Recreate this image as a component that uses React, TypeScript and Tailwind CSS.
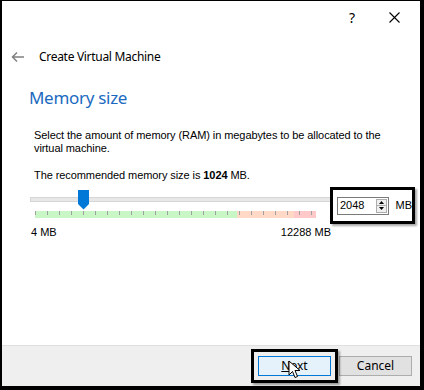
import React from 'react'

const ticks = Array.from({ length: 24 }, (_, i) => i)

function Cursor() {
  return (
    <svg width="14" height="20" viewBox="0 0 14 20" className="absolute left-[34px] top-[8px]">
      <path d="M1 1 L1 15 L4.5 11.5 L7 17.5 L9.5 16.5 L7 10.5 L12 10.5 Z" fill="#fff" stroke="#000" strokeWidth="1" strokeLinejoin="round" />
    </svg>
  )
}

function App() {
  return (
    <div className="relative box-border flex h-[390px] w-[424px] flex-col overflow-hidden border-b-[4px] border-l-2 border-r-[4px] border-t border-black bg-white">
      {/* title bar */}
      <div className="flex h-[33px] items-center justify-end pr-[20px] text-[15px] text-black" style={{ fontFamily: '"Noto Sans", sans-serif' }}>
        <span className="mr-[34px] text-[14px]">?</span>
        <svg width="11" height="11" viewBox="0 0 11 11">
          <path d="M0.5 0.5 L10.5 10.5 M10.5 0.5 L0.5 10.5" stroke="#000" strokeWidth="1.1" />
        </svg>
      </div>

      <div className="flex h-[46px] items-center pl-[9px]" style={{ fontFamily: '"Noto Sans", sans-serif' }}>
        <svg width="14" height="12" viewBox="0 0 14 12">
          <path d="M13 6 H1.5 M6 1.5 L1.5 6 L6 10.5" fill="none" stroke="#808080" strokeWidth="1.5" />
        </svg>
        <span className="ml-[14px] text-[12px] tracking-[-0.3px] text-black">Create Virtual Machine</span>
      </div>

      <div className="pl-[27px] pt-[6px] text-[17px] leading-[24px] tracking-[-0.3px] text-[#1b6ac0]" style={{ fontFamily: '"Noto Sans", sans-serif' }}>
        Memory size
      </div>

      <div className="flex flex-col pl-[32px] text-[11px] text-black" style={{ fontFamily: '"Liberation Sans", Arial, sans-serif' }}>
        <p className="mt-[19px] w-[360px] leading-[13px] tracking-[-0.08px]">
          Select the amount of memory (RAM) in megabytes to be allocated to the virtual machine.
        </p>
        <p className="mt-[14px] leading-[13px] tracking-[-0.08px]">
          The recommended memory size is <b>1024</b> MB.
        </p>

        <div className="mt-[9px] flex items-start">
          <div className="flex w-[296px] shrink-0 flex-col">
            <div className="relative h-[20px]">
              <div className="absolute left-[-4px] right-[-4px] top-[6px] h-[5px] border border-[#d6d6d6] bg-[#e7e7e7]" />
              <svg width="11" height="20" viewBox="0 0 11 20" className="absolute left-[44px] top-[-1px]">
                <path d="M0 0 H11 V14 L5.5 19.5 L0 14 Z" fill="#0078d7" />
              </svg>
            </div>
            <div className="relative ml-[1px] flex h-[7px] w-[281px]">
              <div className="h-full w-[202px] bg-[#c8f7c5]" />
              <div className="h-full w-[57px] bg-[#ffd9c5]" />
              <div className="h-full w-[22px] bg-[#ffc9c9]" />
              {ticks.map((i) => (
                <div key={i} className="absolute top-0 h-[4px] w-px bg-[#a0a0a0]" style={{ left: i * 12 }} />
              ))}
            </div>
            <div className="mr-[-1px] mt-[8px] flex justify-between leading-[13px]">
              <span className="ml-[-3px]">4 MB</span>
              <span>12288 MB</span>
            </div>
          </div>

          <div className="relative mt-[-4px] flex h-[37px] w-[85px] shrink-0 items-center border-[3px] border-black bg-white pl-[4px] shadow-[2px_2px_2px_rgba(0,0,0,0.35)]">
            <div className="flex h-[18px] w-[54px] items-center justify-between border border-[#7a7a7a] bg-white pl-[2px] pr-[1px]">
              <span>2048</span>
              <div className="flex h-[14px] w-[11px] flex-col border border-[#adadad] bg-[#f0f0f0]">
                <div className="flex flex-1 items-center justify-center border-b border-[#adadad]">
                  <svg width="5" height="3" viewBox="0 0 5 3"><path d="M0 3 L2.5 0 L5 3 Z" fill="#000" /></svg>
                </div>
                <div className="flex flex-1 items-center justify-center">
                  <svg width="5" height="3" viewBox="0 0 5 3"><path d="M0 0 L2.5 3 L5 0 Z" fill="#000" /></svg>
                </div>
              </div>
            </div>
            <span className="ml-[7px]">MB</span>
          </div>
        </div>
      </div>

      <div className="mt-auto flex h-[41px] items-center justify-end border-t border-[#dfdfdf] bg-[#efefef] pr-[8px] text-[12px] text-black" style={{ fontFamily: '"Noto Sans", sans-serif' }}>
        <div className="relative flex h-[34px] w-[87px] items-center justify-center border-[3px] border-black shadow-[2px_2px_2px_rgba(0,0,0,0.35)]">
          <div className="flex h-[20px] w-[73px] items-center justify-center border border-[#0078d7] bg-[#e5f1fb]">
            <span><span className="underline">N</span>ext</span>
          </div>
          <Cursor />
        </div>
        <div className="ml-[1px] flex h-[20px] w-[73px] items-center justify-center border border-[#adadad] bg-[#e1e1e1]">
          Cancel
        </div>
      </div>
    </div>
  )
}

export default App
